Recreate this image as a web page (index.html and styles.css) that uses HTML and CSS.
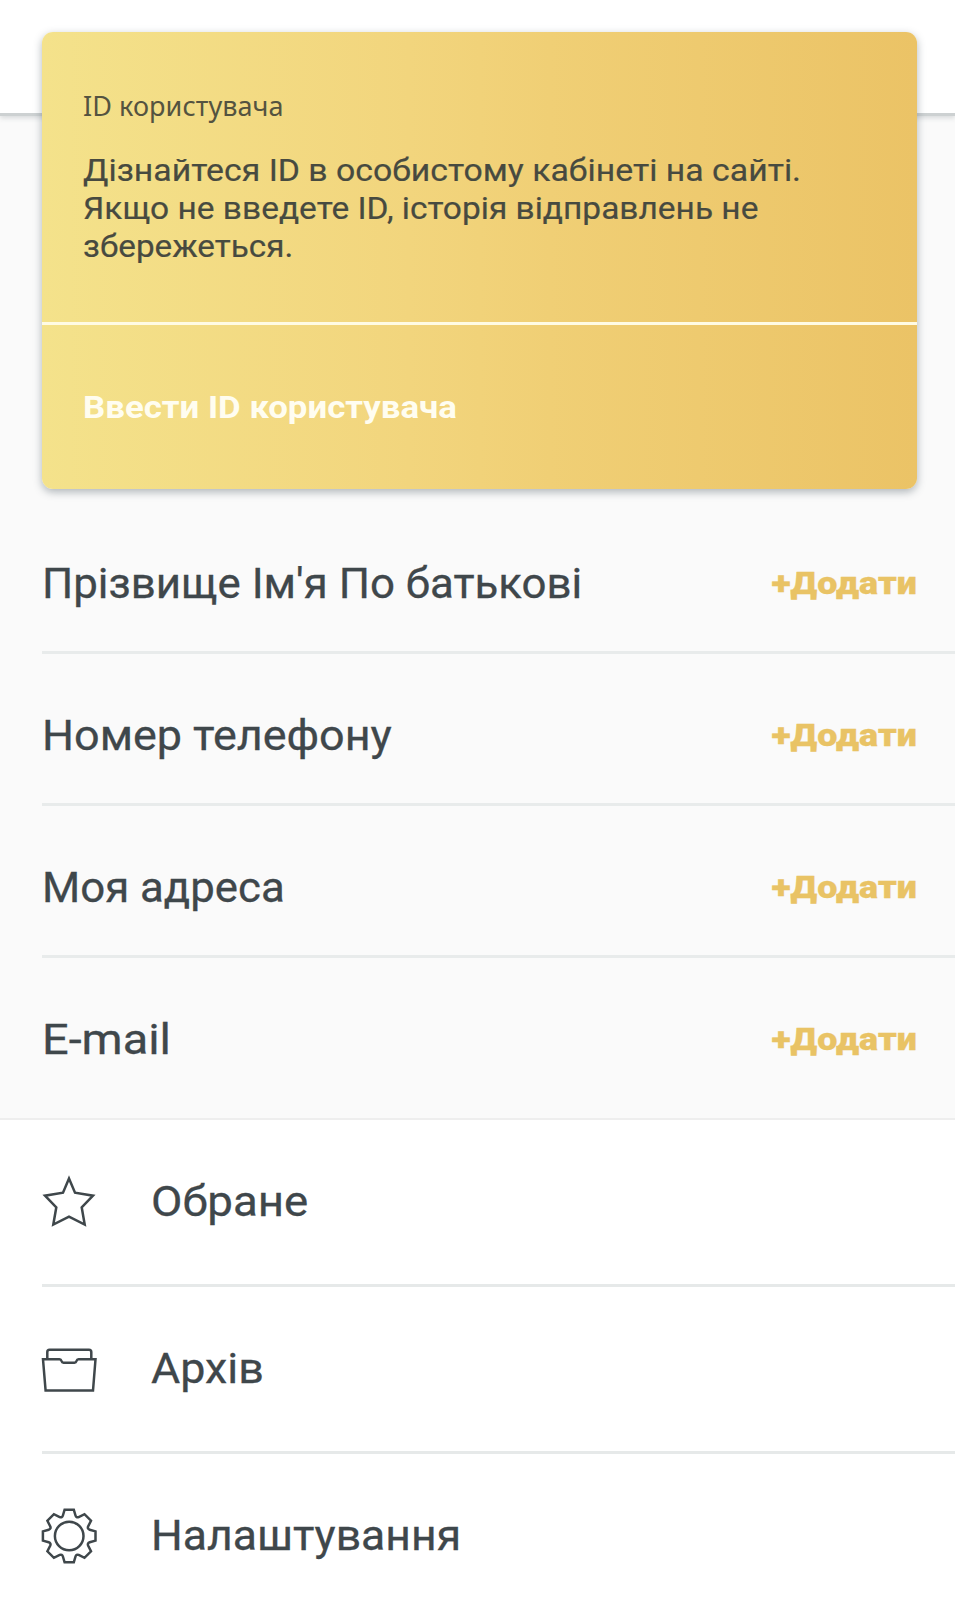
FILE: index.html
```html
<!DOCTYPE html>
<html lang="uk">
<head>
<meta charset="utf-8">
<title>Профіль</title>
<link rel="stylesheet" href="styles.css">
</head>
<body>
<main class="screen">
  <header class="topbar"></header>
  <section class="profile">
    <article class="card">
      <div class="card-info">
        <h2 class="card-label">ID користувача</h2>
        <p class="card-text"><span class="wide line-a">Дізнайтеся ID в особистому кабінеті на сайті.</span><br><span class="wide line-b">Якщо не введете ID, історія відправлень не</span><br><span class="wide line-c">збережеться.</span></p>
      </div>
      <a class="card-action"><span class="wide action-text">Ввести ID користувача</span></a>
    </article>
    <ul class="fields">
      <li class="field"><span class="wide name-full">Прізвище Ім'я По батькові</span><a class="add">+Додати</a></li>
      <li class="field"><span class="wide name-phone">Номер телефону</span><a class="add">+Додати</a></li>
      <li class="field"><span class="wide name-address">Моя адреса</span><a class="add">+Додати</a></li>
      <li class="field"><span class="wide name-email">E-mail</span><a class="add">+Додати</a></li>
    </ul>
  </section>
  <nav class="menu">
    <a class="item"><svg class="icon" viewBox="0 0 56 56"><path d="M28 4.500 34 18.700 52 21.700 40.700 33.300 43.700 50.500 28 42.700 12.300 50.500 15.300 33.300 4 21.700 22 18.700Z"/></svg><span class="wide menu-fav">Обране</span></a>
    <a class="item"><svg class="icon" viewBox="0 0 56 56"><path d="M6.300 18.300V11Q6.300 8.700 8.500 8.700H48Q50.300 8.700 50.300 11V18.300M2 18.300H18.500Q20 18.300 20.500 20 21 21.700 22.500 21.700H33.500Q35 21.700 35.500 20 36 18.300 37.500 18.300H54.500L52 49.500H4.600Z"/></svg><span class="wide menu-archive">Архів</span></a>
    <a class="item"><svg class="icon" viewBox="0 0 56 56"><g transform="translate(28.200 28)"><circle r="14.300"/><path d="M-4.600-26.300H4.600L6.300-20.500Q7-18 9.500-18.900L15.300-21.800 21.800-15.300 18.900-9.500Q18-7 20.500-6.300L26.300-4.600V4.600L20.500 6.300Q18 7 18.900 9.500L21.800 15.300 15.300 21.800 9.500 18.900Q7 18 6.300 20.500L4.600 26.300H-4.600L-6.300 20.500Q-7 18-9.500 18.900L-15.300 21.800-21.800 15.300-18.900 9.500Q-18 7-20.500 6.300L-26.300 4.600V-4.600L-20.500-6.300Q-18-7-18.900-9.500L-21.800-15.300-15.300-21.800-9.500-18.900Q-7-18-6.300-20.500Z"/></g></svg><span class="wide menu-settings">Налаштування</span></a>
  </nav>
</main>
</body>
</html>
```
FILE: styles.css
```css
* { box-sizing: border-box; }
body { margin: 0; background: #fff; color: #3f474b; font-family: Roboto, sans-serif; }
.screen { width: 955px; height: 1600px; overflow: hidden; }
.topbar { position: relative; height: 116px; border-bottom: 3px solid #cdd1d2; box-shadow: 0 2px 5px rgba(60,70,75,.18); }
.profile { display: flex; flex-direction: column; height: 1004px; background: #fafafa; border-bottom: 2px solid #eee; }

/* Labels are set slightly extended */
.wide { display: inline-block; transform-origin: 0 50%; white-space: nowrap; }

.card { position: relative; flex: none; display: flex; flex-direction: column; margin: -84px 38px 0 42px; height: 457px; border-radius: 11px; background: linear-gradient(90deg, #f4e28b, #f2d57d 42%, #f0cf75 58%, #ebc366); box-shadow: 0 3px 9px rgba(60,75,85,.4); }
.card-info { height: 293px; padding: 56px 42px 0; border-bottom: 3px solid #fffbe4; color: #474a40; }
.card-label { margin: 0 0 27px -1px; font: 27px/36px "Noto Sans", sans-serif; letter-spacing: .07px; color: #545340; }
.card-text { margin: 0 -20px 0 -1px; font-size: 32px; line-height: 38.2px; -webkit-text-stroke: .2px; white-space: nowrap; }
.line-a { transform: scaleX(1.056); }
.line-b { transform: scaleX(1.046); }
.line-c { transform: scaleX(1.039); }
.card-action { flex: 1; display: flex; align-items: center; padding: 0 41px; font-size: 31.5px; font-weight: 700; color: #fffdf0; }
.action-text { transform: scaleX(1.105); }

.fields { margin: 13px 0 0; padding: 0 0 0 42px; list-style: none; }
.field { display: flex; align-items: center; justify-content: space-between; height: 152px; padding: 14px 38px 0 0; border-bottom: 3px solid #e8ebeb; font-size: 42px; -webkit-text-stroke: .3px; }
.field:last-child { border-bottom-color: transparent; }
.name-full { transform: scaleX(1.043); }
.name-phone { transform: scaleX(1.069); }
.name-address { transform: scaleX(1.042); }
.name-email { transform: scaleX(1.116); }
.add { margin-top: -2px; font-size: 32px; font-weight: 900; color: #e9c365; transform: scaleX(1.12); transform-origin: 100% 50%; }

.item { display: flex; align-items: center; height: 167px; margin-left: 42px; border-bottom: 3px solid #e6e9e9; font-size: 42px; -webkit-text-stroke: .3px; }
.item .wide { margin-top: -2px; }
.icon { width: 56px; height: 56px; margin: 0 54px 0 -1px; fill: none; stroke: #3f474b; stroke-width: 2.5; }
.menu-fav { transform: scaleX(1.087); }
.menu-archive { transform: scaleX(1.067); }
.menu-settings { transform: scaleX(1.06); }
```
